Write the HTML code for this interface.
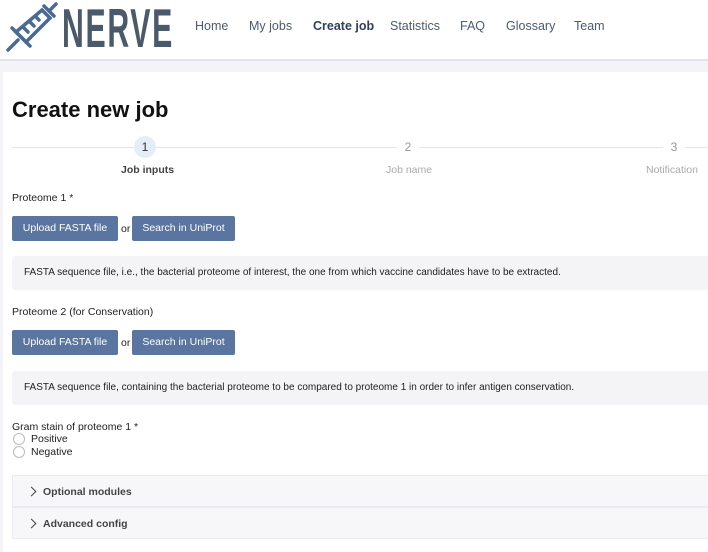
<!DOCTYPE html>
<html><head><meta charset="utf-8"><style>
*{box-sizing:border-box;margin:0;padding:0}
body{width:708px;height:541px;overflow:hidden;background:#f3f3f8;font-family:"Liberation Sans",sans-serif;color:#222;position:relative}
.hdr{position:absolute;left:0;top:0;width:708px;height:61px;background:#fff;border-bottom:2px solid #e2e2ea}
.logo{position:absolute;left:62px;top:-4px;font-size:55px;font-weight:bold;color:#4b5a6b;transform:scaleX(.55);transform-origin:left top;letter-spacing:3px}
.nav{position:absolute;top:19px;font-size:12.5px;color:#4a5b73}
.card{position:absolute;left:3px;top:72px;width:710px;height:480px;background:#fff}
.a{position:absolute}
h1{position:absolute;left:12px;top:97px;font-size:22px;font-weight:bold;color:#111}
.line{position:absolute;top:147px;height:1px;background:#e5e5e8}
.circ{position:absolute;top:136px;width:22px;height:22px;border-radius:50%;text-align:center;line-height:22px;font-size:12px;color:#999;background:#fff}
.lbl{position:absolute;font-size:10.5px}
.btn{position:absolute;height:25px;background:#5a76a0;color:#fff;font-size:10.5px;line-height:25px;text-align:center;border-radius:2px}
.info{position:absolute;left:12px;width:700px;height:34px;background:#f4f4f6;border-radius:3px;font-size:10px;line-height:34px;padding-left:12px}
.rad{position:absolute;left:13px;width:12px;height:12px;border:1px solid #bbb;border-radius:50%}
.acc{position:absolute;left:12px;width:700px;height:32px;background:#f7f7f9;border:1px solid #ebebef;font-size:10.5px;font-weight:bold;color:#444;line-height:32px;padding-left:30px}
.acc:before{content:"";position:absolute;left:15px;top:12px;width:6px;height:6px;border-right:1.5px solid #444;border-top:1.5px solid #444;transform:rotate(45deg)}
</style></head><body>
<div class="hdr">
<svg class="a" style="left:4px;top:2px" width="55" height="52" viewBox="0 0 55 52"><g stroke="#4b6a92" stroke-width="3.5" fill="none" stroke-linecap="round"><line x1="4" y1="48" x2="14" y2="38"/><path d="M12 30 L38 8 L46 16 L22 40 Z"/><line x1="8" y1="26" x2="26" y2="44"/><line x1="40" y1="4" x2="50" y2="14"/><line x1="45" y1="9" x2="52" y2="2"/><line x1="20" y1="26" x2="24" y2="30"/><line x1="26" y1="20" x2="30" y2="24"/><line x1="32" y1="15" x2="35" y2="18"/></g></svg>
<div class="logo">NERVE</div>
<div class="nav" style="left:195px">Home</div>
<div class="nav" style="left:249px">My jobs</div>
<div class="nav" style="left:313px;font-weight:bold;color:#2f3f57">Create job</div>
<div class="nav" style="left:390px">Statistics</div>
<div class="nav" style="left:460px">FAQ</div>
<div class="nav" style="left:506px">Glossary</div>
<div class="nav" style="left:574px">Team</div>
</div>
<div class="card"></div>
<h1>Create new job</h1>
<div class="line" style="left:12px;width:696px"></div>
<div class="circ" style="left:134px;background:#e3eef8;color:#333">1</div>
<div class="circ" style="left:397px">2</div>
<div class="circ" style="left:663px">3</div>
<div class="lbl" style="left:121px;top:164px;font-weight:bold;color:#444">Job inputs</div>
<div class="lbl" style="left:386px;top:164px;color:#aaa">Job name</div>
<div class="lbl" style="left:646px;top:164px;color:#aaa">Notification</div>
<div class="lbl" style="left:12px;top:192px">Proteome 1 *</div>
<div class="btn" style="left:12px;top:216px;width:106px">Upload FASTA file</div>
<div class="lbl" style="left:121px;top:223px">or</div>
<div class="btn" style="left:132px;top:216px;width:103px">Search in UniProt</div>
<div class="info" style="top:256px">FASTA sequence file, i.e., the bacterial proteome of interest, the one from which vaccine candidates have to be extracted.</div>
<div class="lbl" style="left:12px;top:306px">Proteome 2 (for Conservation)</div>
<div class="btn" style="left:12px;top:330px;width:106px">Upload FASTA file</div>
<div class="lbl" style="left:121px;top:337px">or</div>
<div class="btn" style="left:132px;top:330px;width:103px">Search in UniProt</div>
<div class="info" style="top:371px">FASTA sequence file, containing the bacterial proteome to be compared to proteome 1 in order to infer antigen conservation.</div>
<div class="lbl" style="left:12px;top:421px">Gram stain of proteome 1 *</div>
<div class="rad" style="top:433px"></div><div class="lbl" style="left:31px;top:433px">Positive</div>
<div class="rad" style="top:446px"></div><div class="lbl" style="left:31px;top:446px">Negative</div>
<div class="acc" style="top:475px">Optional modules</div>
<div class="acc" style="top:507px">Advanced config</div>
</body></html>
